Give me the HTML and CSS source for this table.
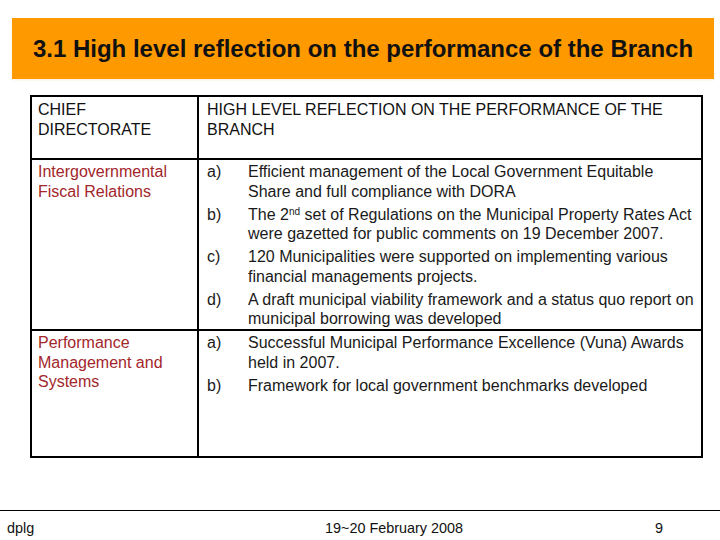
FILE: index.html
```html
<!DOCTYPE html>
<html>
<head>
<meta charset="utf-8">
<link rel="stylesheet" href="styles.css">
</head>
<body>
<div class="slide">
  <div class="title-bar">
    <h1 class="title">3.1 High level reflection on the performance of the Branch</h1>
  </div>
  <table class="report">
    <tr class="row-head">
      <td class="col-left">CHIEF<br>DIRECTORATE</td>
      <td class="col-right"><div class="head-text">HIGH LEVEL REFLECTION ON THE PERFORMANCE OF THE BRANCH</div></td>
    </tr>
    <tr class="row-one">
      <td class="col-left red">Intergovernmental Fiscal Relations</td>
      <td class="col-right">
        <div class="items">
          <span class="lbl">a)</span><span class="txt">Efficient management of the Local Government Equitable Share and full compliance with DORA</span>
          <span class="lbl">b)</span><span class="txt">The 2<sup>nd</sup> set of Regulations on the Municipal Property Rates Act were gazetted for public comments on 19 December 2007.</span>
          <span class="lbl">c)</span><span class="txt">120 Municipalities were supported on implementing various financial managements projects.</span>
          <span class="lbl">d)</span><span class="txt">A draft municipal viability framework and a status quo report on municipal borrowing was developed</span>
        </div>
      </td>
    </tr>
    <tr class="row-two">
      <td class="col-left red">Performance Management and Systems</td>
      <td class="col-right">
        <div class="items">
          <span class="lbl">a)</span><span class="txt">Successful Municipal Performance Excellence (Vuna) Awards held in 2007.</span>
          <span class="lbl">b)</span><span class="txt">Framework for local government benchmarks developed</span>
        </div>
      </td>
    </tr>
  </table>
  <div class="footer">
    <span class="f-left">dplg</span>
    <span class="f-mid">19~20 February 2008</span>
    <span class="f-right">9</span>
  </div>
</div>
</body>
</html>
```

FILE: styles.css
```css
* { box-sizing: border-box; }
html, body { margin: 0; padding: 0; background: #fff; }
body { font-family: "Liberation Sans", Arial, sans-serif; color: #111; }

.slide {
  width: 720px;
  height: 540px;
  position: relative;
  overflow: hidden;
  padding-top: 18px;
}

.title-bar {
  margin-left: 12px;
  width: 702px;
  height: 61px;
  background: #ff9900;
  display: flex;
  align-items: center;
  justify-content: center;
  box-shadow: 0 1px 2px rgba(230, 210, 150, 0.35);
}
.title {
  margin: 0;
  font-size: 24px;
  font-weight: bold;
  color: #111;
  white-space: nowrap;
}

.report {
  margin-top: 16px;
  margin-left: 30px;
  width: 673px;
  border-collapse: collapse;
  border: 2px solid #000;
  font-size: 16px;
  line-height: 19.5px;
  table-layout: fixed;
}
.report td {
  border: 2px solid #000;
  vertical-align: top;
  padding: 0;
}
.col-left {
  width: 167px;
  padding: 2px 4px 0 6px !important;
}
.col-right {
  padding: 2px 2px 0 8px !important;
}
.row-head { height: 63px; }
.row-head td { padding-top: 3px !important; }
.row-one { height: 171px; }
.row-two { height: 127px; }
.red { color: #a3262b; }

.head-text { width: 470px; }

.items {
  display: grid;
  grid-template-columns: 41px 448px;
  row-gap: 3.5px;
  color: #1a1a1a;
}
sup {
  font-size: 10px;
  line-height: 0;
  vertical-align: 5px;
}

.footer {
  position: absolute;
  left: 0;
  top: 510px;
  width: 720px;
  height: 30px;
  border-top: 1px solid #000;
  font-size: 14.4px;
}
.f-left { position: absolute; left: 7px; top: 9px; }
.f-mid { position: absolute; left: 325px; top: 9px; }
.f-right { position: absolute; left: 655px; top: 9px; }
```
